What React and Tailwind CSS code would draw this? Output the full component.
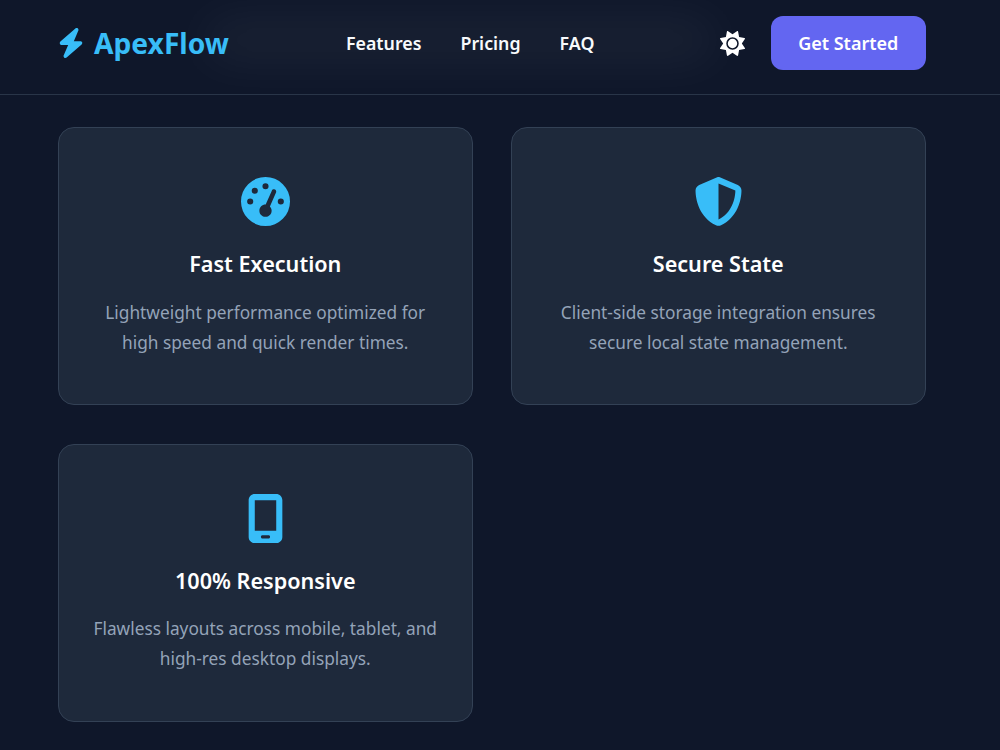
import { FaBolt, FaSun, FaGaugeHigh, FaShieldHalved, FaMobileScreen } from 'react-icons/fa6';

const features = [
  { icon: FaGaugeHigh, title: 'Fast Execution', text: ['Lightweight performance optimized for', 'high speed and quick render times.'] },
  { icon: FaShieldHalved, title: 'Secure State', text: ['Client-side storage integration ensures', 'secure local state management.'] },
  { icon: FaMobileScreen, title: '100% Responsive', text: ['Flawless layouts across mobile, tablet, and', 'high-res desktop displays.'] },
];

const FeatureCard = ({ icon: Icon, title, text }) => (
  <div className="h-[278px] rounded-2xl border border-[#334155] bg-[#1e293b] pt-[49px] text-center">
    <Icon className="mx-auto text-[#38bdf8]" size={49} />
    <h3 className="mt-[23px] text-[21.6px] leading-[30px] font-semibold text-white">{title}</h3>
    <p className="mt-[18.6px] text-[17.3px] leading-[30px] text-[#94a3b8]">
      {text[0]}
      <br />
      {text[1]}
    </p>
  </div>
);

export default function App() {
  return (
    <div className="h-[750px] overflow-hidden bg-[#0f172a] font-['Noto_Sans','Open_Sans',sans-serif]">
      {/* Nav */}
      <nav className="relative flex h-[95px] items-start overflow-hidden border-b border-[#293548] pt-[16px] pr-[74.5px] pl-[58px]">
        {/* blurred hero text behind the nav */}
        <div className="absolute top-[22px] left-[205px] h-[36px] w-[510px] rounded-full bg-white/[0.06] blur-xl" />
        <div className="relative flex h-[54px] w-[288px] items-center gap-[8px] text-[#38bdf8]">
          <FaBolt className="-ml-[2px]" size={30} />
          <span className="text-[28.2px] leading-none font-bold">ApexFlow</span>
        </div>
        <div className="relative flex h-[54px] items-center gap-[39px] pt-px text-[17.8px] font-semibold text-[#f8fafc]">
          <span>Features</span>
          <span>Pricing</span>
          <span>FAQ</span>
        </div>
        <div className="relative ml-auto flex items-center gap-[26px]">
          <FaSun className="text-white" size={25} />
          <button className="h-[54px] w-[154.5px] rounded-xl bg-[#6366f1] pt-px text-[18px] font-semibold text-white">Get Started</button>
        </div>
      </nav>

      {/* Features */}
      <div className="grid grid-cols-2 gap-x-[38.5px] gap-y-[38.6px] pt-[32px] pr-[74.5px] pl-[58px]">
        {features.map((f) => (
          <FeatureCard key={f.title} {...f} />
        ))}
      </div>
    </div>
  );
}
